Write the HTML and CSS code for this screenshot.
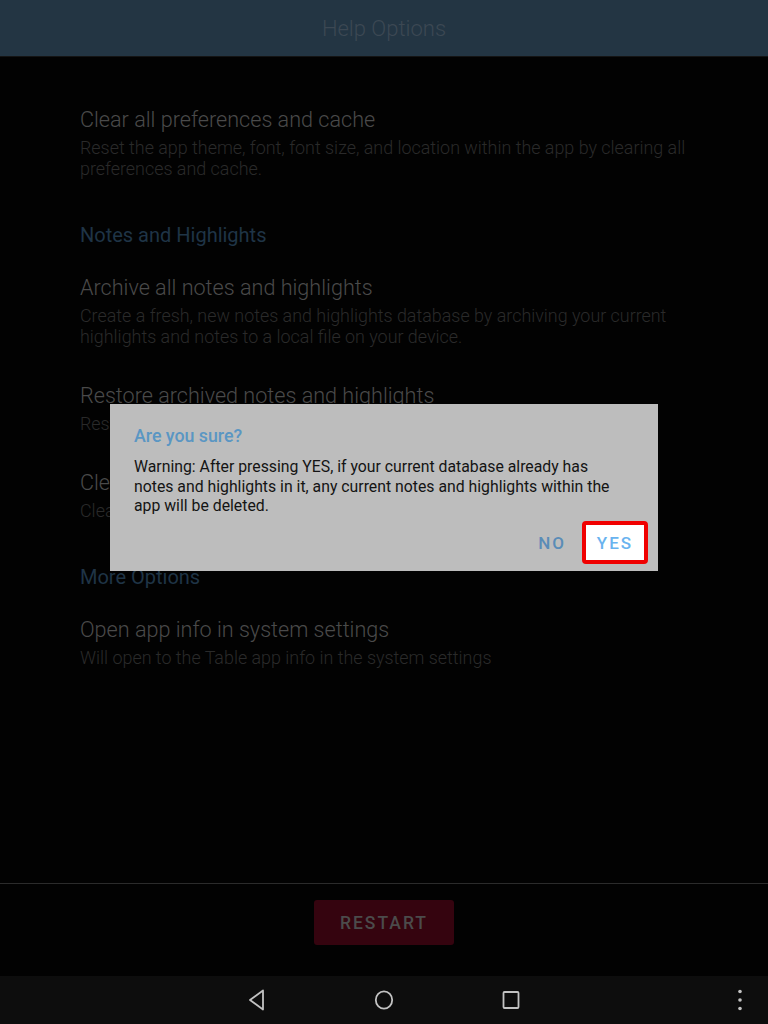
FILE: index.html
```html
<html>
	<head>
		<meta name="viewport" content="width=device-width, initial-scale=1.0" />
		<link rel="stylesheet" href="styles.css">
	</head>
	<body>
		<div id="screen">
			<div id="titlebar">Help Options</div>

			<div id="mainbody">
				<div class="pref">
					<div class="pref-title">Clear all preferences and cache</div>
					<div class="pref-sub">Reset the app theme, font, font size, and location within the app by clearing all preferences and cache.</div>
				</div>

				<div class="section">Notes and Highlights</div>

				<div class="pref">
					<div class="pref-title">Archive all notes and highlights</div>
					<div class="pref-sub">Create a fresh, new notes and highlights database by archiving your current highlights and notes to a local file on your device.</div>
				</div>
				<div class="pref">
					<div class="pref-title">Restore archived notes and highlights</div>
					<div class="pref-sub">Restore notes and highlights from an archived file.</div>
				</div>
				<div class="pref">
					<div class="pref-title">Clear all notes and highlights</div>
					<div class="pref-sub">Clear all notes and highlights from the app.</div>
				</div>

				<div class="section">More Options</div>

				<div class="pref">
					<div class="pref-title">Open app info in system settings</div>
					<div class="pref-sub">Will open to the Table app info in the system settings</div>
				</div>
			</div>

			<div id="footer">
				<div class="restart">RESTART</div>
			</div>

			<div id="navbar">
				<svg class="navicon" width="20" height="24" viewBox="0 0 20 24">
					<path d="M16 2.5 L3 12 L16 21.5 Z" fill="none" stroke="#c2c2c2" stroke-width="1.8" stroke-linejoin="round" />
				</svg>
				<svg class="navicon" width="22" height="24" viewBox="0 0 22 24">
					<ellipse cx="11" cy="12" rx="8.2" ry="8.6" fill="none" stroke="#c2c2c2" stroke-width="1.8" />
				</svg>
				<svg class="navicon" width="20" height="24" viewBox="0 0 20 24">
					<rect x="2.5" y="4" width="15" height="16" rx="1" fill="none" stroke="#c2c2c2" stroke-width="1.8" />
				</svg>
				<svg class="navmenu" width="6" height="24" viewBox="0 0 6 24">
					<circle cx="3" cy="3.5" r="1.8" fill="#c2c2c2" />
					<circle cx="3" cy="12" r="1.8" fill="#c2c2c2" />
					<circle cx="3" cy="20.5" r="1.8" fill="#c2c2c2" />
				</svg>
			</div>

			<div id="dialog">
				<div class="dialog-title">Are you sure?</div>
				<div class="dialog-text">Warning: After pressing YES, if your current database already has notes and highlights in it, any current notes and highlights within the app will be deleted.</div>
				<div class="dialog-buttons">
					<div class="btn-no">NO</div>
					<div class="btn-yes">YES</div>
				</div>
			</div>
		</div>
	</body>
</html>
```

FILE: styles.css
```css
body {
	margin:0px;
	background-color:#020202;
	font-family: Roboto, "Noto Sans", "Liberation Sans", sans-serif;
}
#screen {
	position:relative;
	display:flex;
	flex-direction:column;
	width:768px;
	height:1024px;
	overflow:hidden;
}
#titlebar {
	height:56px;
	line-height:58px;
	background-color:#233543;
	border-bottom:1px solid #141414;
	color:#3c4853;
	font-size:22px;
	font-weight:300;
	text-align:center;
}
#mainbody {
	flex:1;
	padding:51px 80px 0 80px;
}
.pref + .pref {
	margin-top:37px;
}
.pref-title {
	color:#4a4a4a;
	font-size:21.6px;
	font-weight:300;
	line-height:24px;
}
.pref-sub {
	margin-top:5px;
	color:#2a2a2a;
	font-size:17.9px;
	font-weight:300;
	line-height:21px;
}
.section {
	margin:45px 0 30px 0;
	color:#1f3446;
	font-size:20px;
	line-height:22px;
}
#footer {
	border-top:1px solid #2b2b2b;
	padding:16px 0 31px 0;
	display:flex;
	justify-content:center;
}
.restart {
	width:140px;
	height:45px;
	line-height:47px;
	background-color:#35040f;
	border-radius:3px;
	color:#4b4b4b;
	font-size:17.5px;
	font-weight:500;
	letter-spacing:2px;
	text-align:center;
}
#navbar {
	position:relative;
	height:48px;
	background-color:#0d0d0d;
	display:flex;
	align-items:center;
	justify-content:center;
	gap:106px;
}
.navicon {
	display:block;
}
.navmenu {
	position:absolute;
	right:25px;
	top:12px;
}
#dialog {
	position:absolute;
	left:110px;
	top:404px;
	width:548px;
	height:167px;
	box-sizing:border-box;
	padding:21px 10px 7px 24px;
	background-color:#bdbdbd;
	display:flex;
	flex-direction:column;
}
.dialog-title {
	color:#5a96c3;
	font-size:17.8px;
	font-weight:500;
	line-height:22px;
}
.dialog-text {
	margin-top:10px;
	width:492px;
	color:#141414;
	font-size:15.8px;
	line-height:19.5px;
}
.dialog-buttons {
	margin-top:auto;
	display:flex;
	justify-content:flex-end;
	align-items:center;
	gap:16px;
}
.btn-no {
	color:#5a8cb7;
	font-size:17px;
	font-weight:500;
	letter-spacing:2px;
}
.btn-yes {
	width:58px;
	height:35px;
	line-height:37px;
	border:4px solid #f00000;
	border-radius:4px;
	background-color:#ffffff;
	color:#69b3ef;
	font-size:17px;
	font-weight:500;
	letter-spacing:2px;
	text-align:center;
}
```
